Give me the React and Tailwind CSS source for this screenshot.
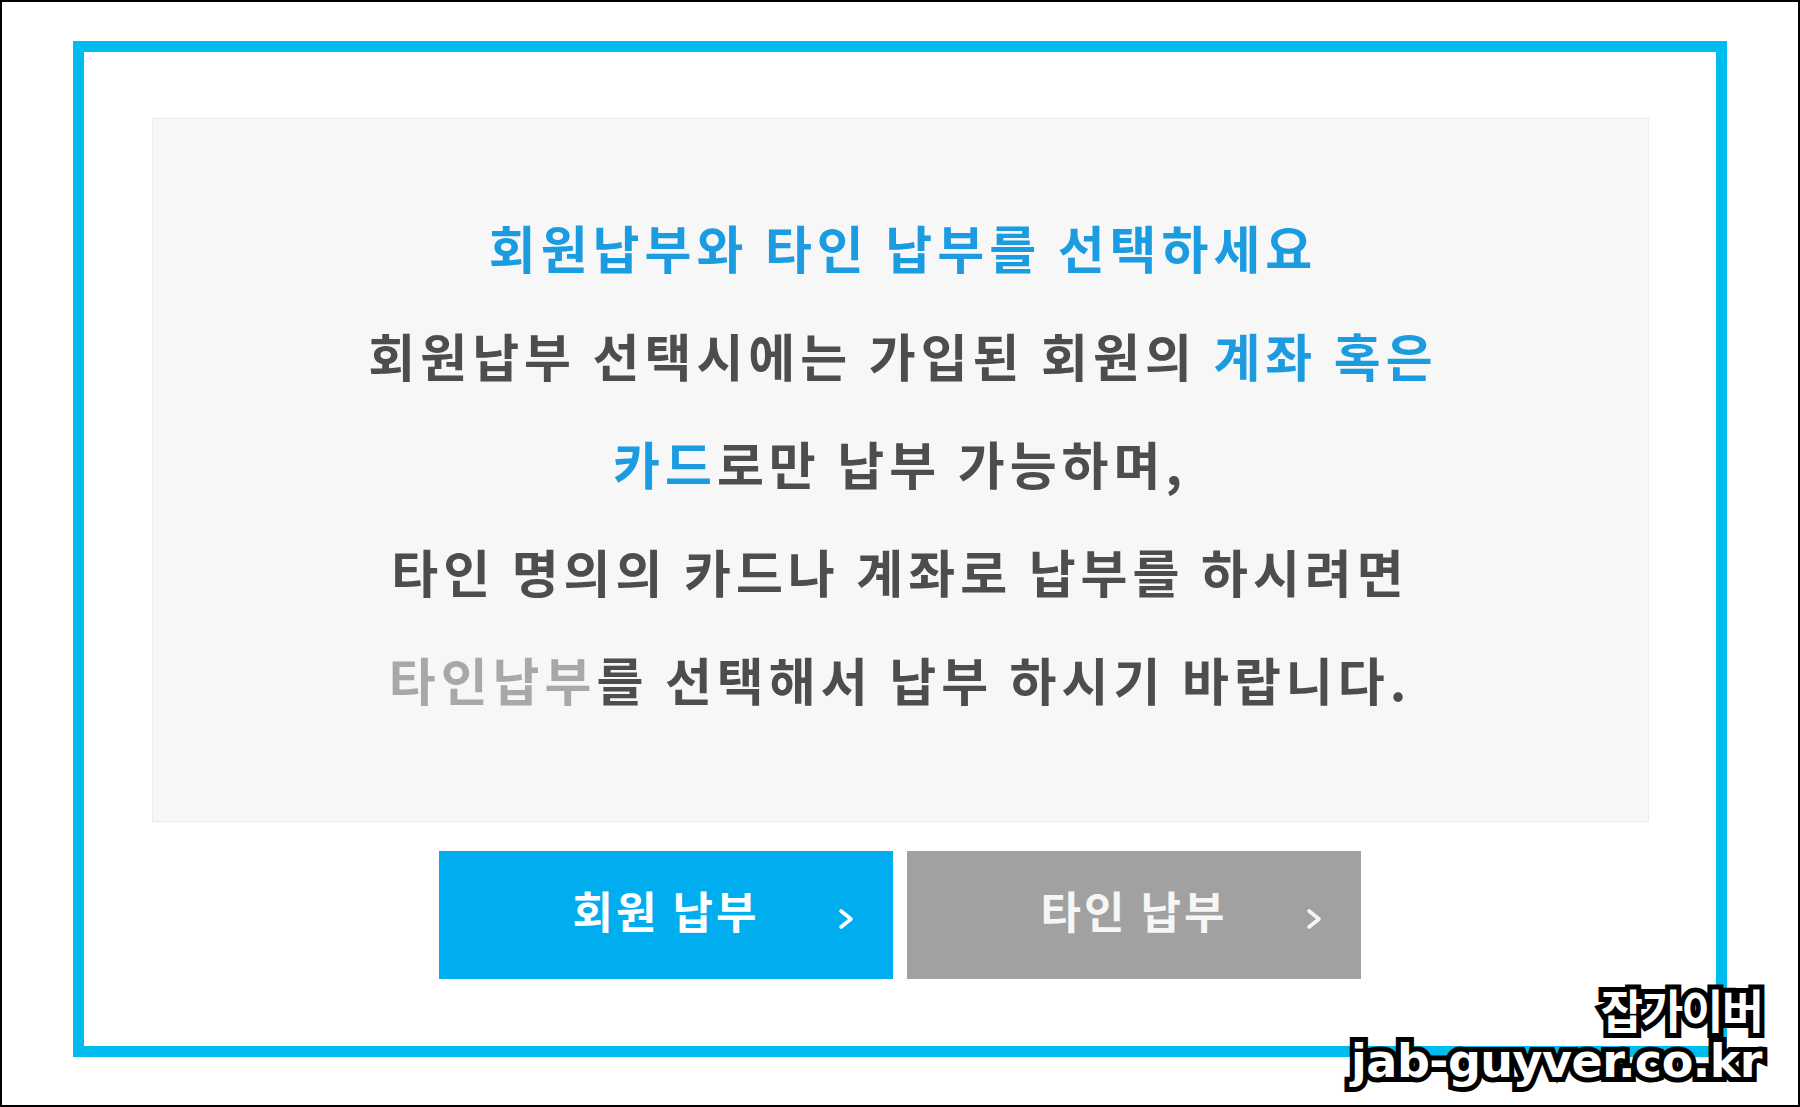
import React from "react";

const KR = { fontFamily: '"Noto Sans CJK KR", "Noto Sans", sans-serif' };

// one line of the notice text
function Line({ children }) {
  return <div className="h-[108px] leading-[108px] whitespace-nowrap">{children}</div>;
}

function Chevron() {
  return (
    <svg width="16" height="22" viewBox="0 0 16 22" className="absolute right-[39px] top-[57px]">
      <polyline points="3,3 13,11 3,19" fill="none" stroke="currentColor" strokeWidth="3.6" strokeLinecap="round" strokeLinejoin="round" />
    </svg>
  );
}

function PayButton({ label, tone }) {
  const bg = tone === "blue" ? "bg-[#00aeef] text-white" : "bg-[#a1a1a1] text-[#f6f6f6]";
  return (
    <button className={`relative w-[454px] h-[128px] ${bg} flex items-center justify-center pb-[10px]`}>
      <span className="text-[44px] font-bold tracking-[3px]">{label}</span>
      <Chevron />
    </button>
  );
}

export default function App() {
  return (
    <div className="relative w-[1800px] h-[1107px] border-2 border-black bg-white pl-[71px] pt-[39px] overflow-hidden" style={KR}>
      {/* cyan frame */}
      <div className="w-[1654px] h-[1016px] border-[11px] border-[#00bdf0] bg-white">
        <div className="mx-auto mt-[66px] w-[1497px] h-[704px] bg-[#f7f7f7] border border-[#ececec] pt-[74px] flex flex-col items-center text-[51px] font-bold tracking-[5px] text-[#4d4d4d]">
          <Line><span className="text-[#1c9ce0] pl-[6px]">회원납부와 타인 납부를 선택하세요</span></Line>
          <Line>
            <span className="pl-[6px]">회원납부 선택시에는 가입된 회원의 </span>
            <span className="text-[#1c9ce0]">계좌 혹은</span>
          </Line>
          <Line>
            <span className="text-[#1c9ce0]">카드</span>로만 납부 가능하며,
          </Line>
          <Line>타인 명의의 카드나 계좌로 납부를 하시려면</Line>
          <Line>
            <span className="text-[#a8a8a8]">타인납부</span>를 선택해서 납부 하시기 바랍니다.
          </Line>
        </div>

        <div className="mt-[29px] flex justify-center gap-[14px]">
          <PayButton label="회원 납부" tone="blue" />
          <PayButton label="타인 납부" tone="gray" />
        </div>
      </div>

      {/* watermark */}
      <div className="absolute right-[36px] top-[984px] flex flex-col items-end gap-[8px] text-white [-webkit-text-stroke:10px_#000] [paint-order:stroke_fill]">
        <div className="text-[46px] font-bold leading-[44px] tracking-[-2px]" style={KR}>잡가이버</div>
        <div
          className="text-[46px] font-bold leading-[46px] tracking-[-0.5px]"
          style={{ fontFamily: '"DejaVu Sans", "Liberation Sans", sans-serif' }}
        >
          jab-guyver.co.kr
        </div>
      </div>
    </div>
  );
}
